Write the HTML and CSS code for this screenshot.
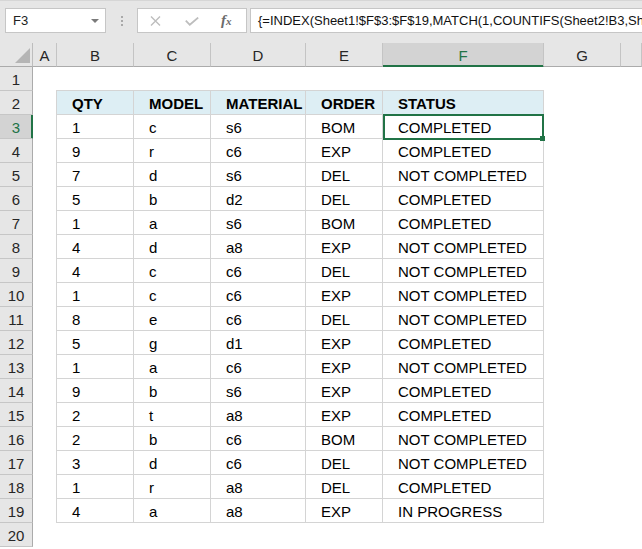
FILE: index.html
```html
<!DOCTYPE html>
<html>
<head>
<meta charset="utf-8">
<link rel="stylesheet" href="styles.css">
</head>
<body>
<div class="app">
  <div class="toolbar">
    <div class="namebox"><span class="ref">F3</span><span class="caret"></span></div>
    <div class="grip"><i></i><i></i><i></i></div>
    <div class="fxbox">
      <svg class="ico-x" width="11" height="10" viewBox="0 0 11 10"><path d="M1 0.5 L10 9.5 M10 0.5 L1 9.5" stroke="#bdbdbd" stroke-width="1.4" fill="none"/></svg>
      <svg class="ico-ok" width="14" height="9" viewBox="0 0 14 9"><path d="M0.8 3.6 L4.8 7.8 L13.2 0.6" stroke="#bdbdbd" stroke-width="1.8" fill="none"/></svg>
      <span class="fx"><span class="f">f</span><span class="x">x</span></span>
    </div>
    <div class="formula">{=INDEX(Sheet1!$F$3:$F$19,MATCH(1,COUNTIFS(Sheet2!B3,Sheet1!$B$3:$B$19,Sheet2!C3,Sheet1!$C$3:$C$19),0))}</div>
  </div>

  <div class="colheads">
    <div class="corner"><svg width="15" height="15" viewBox="0 0 15 15"><path d="M15 0 L15 15 L0 15 Z" fill="#b5b5b5"/></svg></div>
    <div class="ch w-a">A</div>
    <div class="ch w-b">B</div>
    <div class="ch w-c">C</div>
    <div class="ch w-d">D</div>
    <div class="ch w-e">E</div>
    <div class="ch w-f sel">F</div>
    <div class="ch w-g">G</div>
    <div class="ch w-h"></div>
  </div>

  <div class="body">
    <div class="rowheads">
      <div class="rh">1</div><div class="rh">2</div><div class="rh sel">3</div><div class="rh">4</div>
      <div class="rh">5</div><div class="rh">6</div><div class="rh">7</div><div class="rh">8</div>
      <div class="rh">9</div><div class="rh">10</div><div class="rh">11</div><div class="rh">12</div>
      <div class="rh">13</div><div class="rh">14</div><div class="rh">15</div><div class="rh">16</div>
      <div class="rh">17</div><div class="rh">18</div><div class="rh">19</div><div class="rh">20</div>
    </div>
    <div class="sheet">
      <div class="tbl">
        <div class="c th">QTY</div><div class="c th">MODEL</div><div class="c th">MATERIAL</div><div class="c th">ORDER</div><div class="c th">STATUS</div>
        <div class="c">1</div><div class="c">c</div><div class="c">s6</div><div class="c">BOM</div><div class="c active">COMPLETED</div>
        <div class="c">9</div><div class="c">r</div><div class="c">c6</div><div class="c">EXP</div><div class="c">COMPLETED</div>
        <div class="c">7</div><div class="c">d</div><div class="c">s6</div><div class="c">DEL</div><div class="c">NOT COMPLETED</div>
        <div class="c">5</div><div class="c">b</div><div class="c">d2</div><div class="c">DEL</div><div class="c">COMPLETED</div>
        <div class="c">1</div><div class="c">a</div><div class="c">s6</div><div class="c">BOM</div><div class="c">COMPLETED</div>
        <div class="c">4</div><div class="c">d</div><div class="c">a8</div><div class="c">EXP</div><div class="c">NOT COMPLETED</div>
        <div class="c">4</div><div class="c">c</div><div class="c">c6</div><div class="c">DEL</div><div class="c">NOT COMPLETED</div>
        <div class="c">1</div><div class="c">c</div><div class="c">c6</div><div class="c">EXP</div><div class="c">NOT COMPLETED</div>
        <div class="c">8</div><div class="c">e</div><div class="c">c6</div><div class="c">DEL</div><div class="c">NOT COMPLETED</div>
        <div class="c">5</div><div class="c">g</div><div class="c">d1</div><div class="c">EXP</div><div class="c">COMPLETED</div>
        <div class="c">1</div><div class="c">a</div><div class="c">c6</div><div class="c">EXP</div><div class="c">NOT COMPLETED</div>
        <div class="c">9</div><div class="c">b</div><div class="c">s6</div><div class="c">EXP</div><div class="c">COMPLETED</div>
        <div class="c">2</div><div class="c">t</div><div class="c">a8</div><div class="c">EXP</div><div class="c">COMPLETED</div>
        <div class="c">2</div><div class="c">b</div><div class="c">c6</div><div class="c">BOM</div><div class="c">NOT COMPLETED</div>
        <div class="c">3</div><div class="c">d</div><div class="c">c6</div><div class="c">DEL</div><div class="c">NOT COMPLETED</div>
        <div class="c">1</div><div class="c">r</div><div class="c">a8</div><div class="c">DEL</div><div class="c">COMPLETED</div>
        <div class="c">4</div><div class="c">a</div><div class="c">a8</div><div class="c">EXP</div><div class="c">IN PROGRESS</div>
      </div>
    </div>
  </div>
</div>
</body>
</html>
```

FILE: styles.css
```css
* { box-sizing: border-box; }
html, body { margin: 0; padding: 0; }
body {
  font-family: "Liberation Sans", Arial, sans-serif;
  background: #ffffff;
  color: #000;
  overflow: hidden;
}
.app { width: 642px; height: 549px; overflow: hidden; }

/* toolbar */
.toolbar {
  height: 43px;
  background: #e6e6e6;
  border-top: 1px solid #d6d6d6;
  display: flex;
  align-items: flex-start;
  padding-top: 7px;
  overflow: hidden;
}
.namebox {
  width: 101px;
  height: 25px;
  margin-left: 5px;
  background: #fff;
  border: 1px solid #c6c6c6;
  display: flex;
  align-items: center;
  justify-content: space-between;
  padding: 0 6px 0 7px;
  font-size: 13px;
  color: #222;
}
.caret {
  width: 0; height: 0;
  border-left: 4px solid transparent;
  border-right: 4px solid transparent;
  border-top: 4px solid #7a7a7a;
  margin-top: 1px;
}
.grip {
  width: 31px;
  height: 25px;
  display: flex;
  flex-direction: column;
  align-items: center;
  justify-content: center;
  gap: 2px;
}
.grip i { display: block; width: 2px; height: 2px; background: #a9a9a9; }
.fxbox {
  width: 110px;
  height: 25px;
  background: #fff;
  border: 1px solid #c6c6c6;
  display: flex;
  align-items: center;
  position: relative;
}
.ico-x { margin-left: 12px; }
.ico-ok { margin-left: 24px; margin-top: 1px; }
.fx {
  margin-left: 22px;
  font-family: "Liberation Serif", "Times New Roman", serif;
  font-style: italic;
  font-weight: bold;
  color: #6b6b6b;
  line-height: 1;
  display: flex;
  align-items: baseline;
}
.fx .f { font-size: 15px; }
.fx .x { font-size: 11px; margin-left: 0px; }
.formula {
  flex: 1;
  height: 25px;
  margin-left: 3px;
  background: #fff;
  border: 1px solid #c6c6c6;
  border-right: none;
  padding-left: 7px;
  font-size: 13px;
  line-height: 23px;
  color: #111;
  white-space: nowrap;
  overflow: hidden;
}

/* column headers */
.colheads {
  display: flex;
  height: 24px;
  background: #e6e6e6;
}
.corner {
  width: 33px;
  border-right: 1px solid #bdbdbd;
  border-bottom: 1px solid #ababab;
  display: flex;
  align-items: flex-end;
  justify-content: flex-end;
  padding: 0 2px 3px 0;
}
.ch {
  border-right: 1px solid #c4c4c4;
  border-bottom: 1px solid #ababab;
  display: flex;
  align-items: center;
  justify-content: center;
  font-size: 15px;
  color: #262626;
  padding-top: 1px;
}
.ch.sel {
  background: #d3d3d3;
  color: #217346;
  border-bottom-color: #217346;
  box-shadow: inset 0 -1px 0 #217346;
}
.w-a { width: 24px; }
.w-b { width: 77px; }
.w-c { width: 77px; }
.w-d { width: 95px; }
.w-e { width: 77px; }
.w-f { width: 161px; }
.w-g { width: 77px; }
.w-h { flex: 1; }

/* body */
.body { display: flex; }
.rowheads { width: 33px; flex: none; background: #e6e6e6; }
.rh {
  height: 24px;
  border-right: 1px solid #ababab;
  border-bottom: 1px solid #c6c6c6;
  display: flex;
  align-items: center;
  justify-content: center;
  font-size: 15px;
  color: #262626;
  padding-top: 1px;
}
.rh.sel {
  background: #d3d3d3;
  color: #217346;
  border-right-color: #217346;
  box-shadow: inset -1px 0 0 #217346;
}
.sheet {
  flex: 1;
  padding: 23px 0 0 23px;
  background: #fff;
}
.tbl {
  display: grid;
  grid-template-columns: 77px 77px 95px 77px 161px;
  grid-auto-rows: 24px;
  width: max-content;
  border-top: 1px solid #d4d4d4;
  border-left: 1px solid #d4d4d4;
}
.c {
  border-right: 1px solid #d4d4d4;
  border-bottom: 1px solid #d4d4d4;
  padding: 3px 0 0 15px;
  font-size: 15px;
  line-height: 20px;
  white-space: nowrap;
  color: #000;
}
.c.th {
  background: #ddeef4;
  font-weight: bold;
}
.c.active { position: relative; }
.c.active::after {
  content: "";
  position: absolute;
  top: -1px;
  left: 0;
  right: -1px;
  bottom: -2px;
  border: 2px solid #217346;
}
.c.active::before {
  content: "";
  position: absolute;
  right: -2px;
  bottom: -3px;
  width: 5px;
  height: 5px;
  background: #217346;
  z-index: 2;
}
```
